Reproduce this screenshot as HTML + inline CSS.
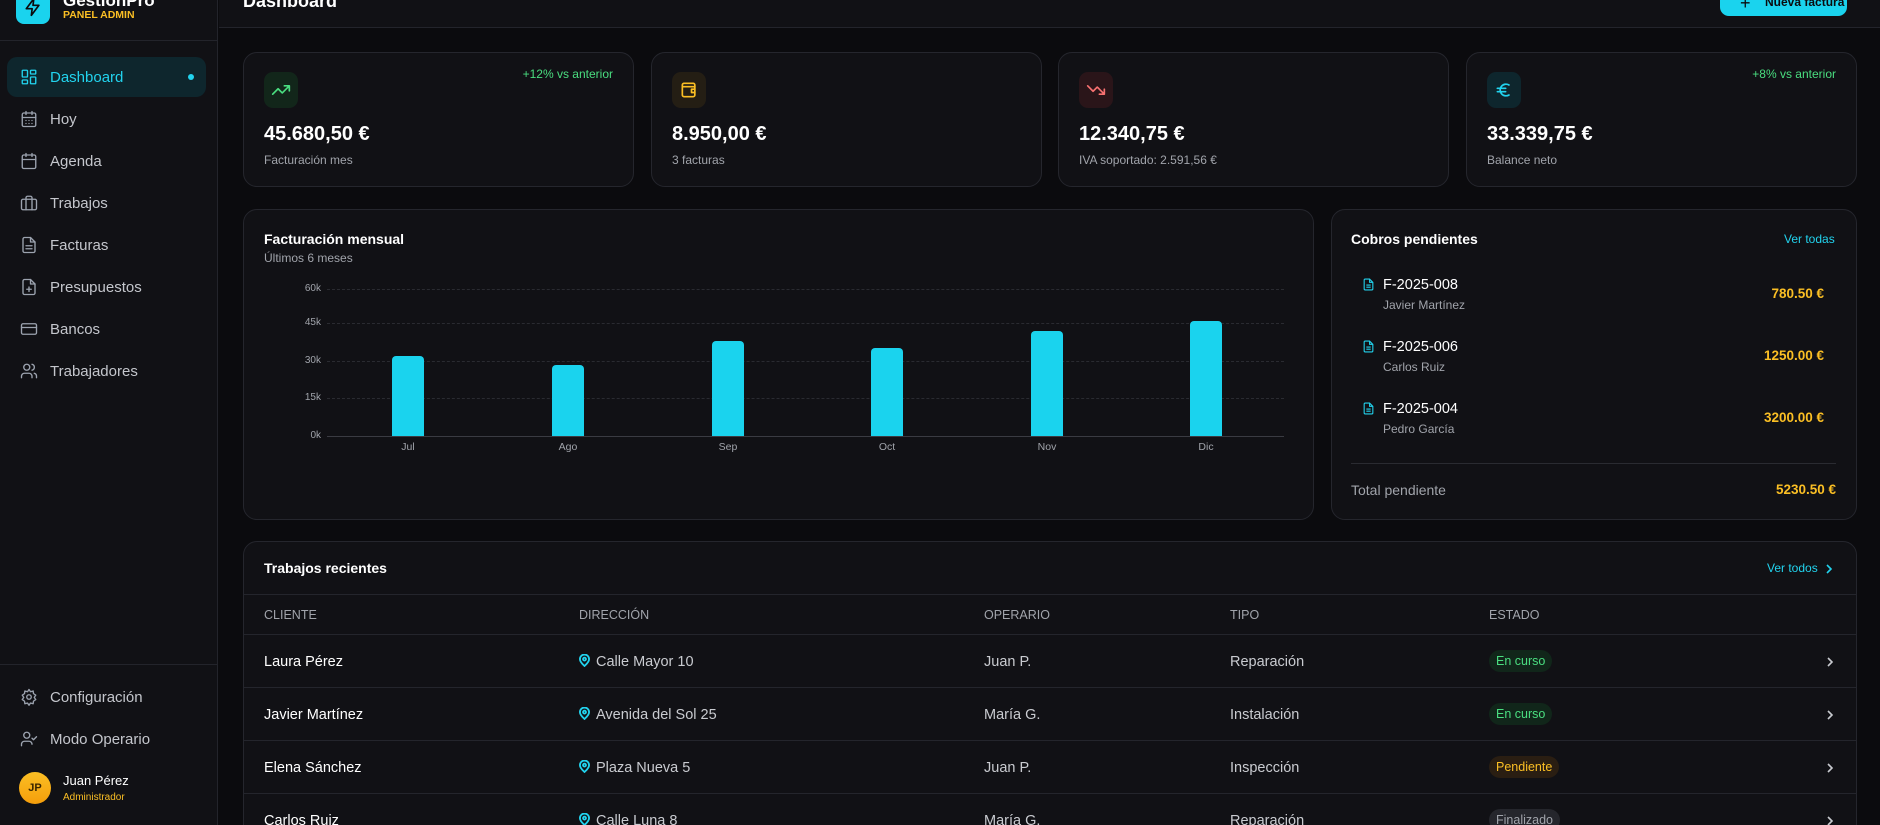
<!DOCTYPE html>
<html style="width:1880px;height:825px;overflow:hidden"><head><meta charset="utf-8"><style>
*{box-sizing:border-box;margin:0;padding:0}
body{width:1880px;height:825px;overflow:hidden;background:#0b0b0e;font-family:"Liberation Sans",sans-serif;color:#e5e7eb;position:relative}
.abs{position:absolute}
.sb{left:0;top:0;width:218px;height:825px;background:#111115;border-right:1px solid #23242b}
.nav{position:absolute;left:7px;width:199px;height:40px;display:flex;align-items:center;padding-left:13px;font-size:15px;color:#c4c6cc}
.nav svg{width:18px;height:18px;margin-right:12px;stroke:#9ca3af;fill:none;stroke-width:1.8;stroke-linecap:round;stroke-linejoin:round}
.card{position:absolute;background:#111115;border:1px solid #25262d;border-radius:14px}
.ico{position:absolute;left:20px;top:19px;width:34px;height:36px;border-radius:9px;display:flex;align-items:center;justify-content:center}
.ico svg{width:20px;height:20px;fill:none;stroke-width:2;stroke-linecap:round;stroke-linejoin:round}
.val{position:absolute;left:20px;top:70px;font-size:20px;font-weight:bold;color:#fff}
.lbl{position:absolute;left:20px;top:100px;font-size:12px;color:#a1a4ab}
.pct{position:absolute;right:20px;top:14px;font-size:12px;color:#4ade80}
.ylab{position:absolute;width:40px;text-align:right;font-size:10px;color:#a1a4ab}
.grid{position:absolute;left:327px;width:957px;border-top:1px dashed #2a2b31}
.bar{position:absolute;width:32px;background:#1ad3ee;border-radius:4px 4px 0 0;bottom:389px}
.xl{position:absolute;top:441px;width:60px;text-align:center;font-size:10.5px;color:#a1a4ab}
.th{position:absolute;top:608px;font-size:12.5px;color:#a1a4ab}
.row{position:absolute;left:244px;width:1612px;height:53px;border-top:1px solid #24252c}
.row span{position:absolute;top:19px;font-size:14.5px;color:#c9cbd0}
.badge{position:absolute;top:15px;height:22px;padding:0 7px;border-radius:11px;font-size:12.5px;line-height:22px}
.pin{width:11px;height:13px;vertical-align:-1px;margin-right:6px;fill:none;stroke:#22d3ee;stroke-width:2}
.chev{position:absolute;left:1581px;top:20px;width:10px;height:14px;fill:none;stroke:#c9cbd0;stroke-width:1.6}
</style></head><body>
<div class="abs sb"></div>
<div class="abs" style="left:16px;top:-10px;width:34px;height:34px;border-radius:8px;background:#1ad3ee;display:flex;align-items:center;justify-content:center"><svg width="20" height="20" viewBox="0 0 24 24" fill="none" stroke="#0b0b0e" stroke-width="2" stroke-linejoin="round"><path d="M13 2L4 14h7l-1 8 9-12h-7z"/></svg></div>
<div class="abs" style="left:63px;top:-9px;font-size:17px;font-weight:bold;color:#fff">GestiónPro</div>
<div class="abs" style="left:63px;top:9px;font-size:10.5px;font-weight:bold;color:#fbbf24">PANEL ADMIN</div>
<div class="abs" style="left:0;top:40px;width:218px;border-top:1px solid #23242b"></div>

<div class="nav" style="top:57px;background:#0e262d;border-radius:10px;color:#22d3ee"><svg style="stroke:#22d3ee" viewBox="0 0 24 24"><rect x="3" y="3" width="7" height="9" rx="1"/><rect x="14" y="3" width="7" height="5" rx="1"/><rect x="14" y="12" width="7" height="9" rx="1"/><rect x="3" y="16" width="7" height="5" rx="1"/></svg>Dashboard<span style="position:absolute;right:12px;top:17px;width:6px;height:6px;border-radius:3px;background:#22d3ee"></span></div>
<div class="nav" style="top:99px"><svg viewBox="0 0 24 24"><rect x="3" y="4" width="18" height="18" rx="2"/><path d="M16 2v4M8 2v4M3 10h18M8 14h.01M12 14h.01M16 14h.01M8 18h.01M12 18h.01M16 18h.01"/></svg>Hoy</div>
<div class="nav" style="top:141px"><svg viewBox="0 0 24 24"><rect x="3" y="4" width="18" height="18" rx="2"/><path d="M16 2v4M8 2v4M3 10h18"/></svg>Agenda</div>
<div class="nav" style="top:183px"><svg viewBox="0 0 24 24"><rect x="2" y="7" width="20" height="14" rx="2"/><path d="M16 21V5a2 2 0 0 0-2-2h-4a2 2 0 0 0-2 2v16"/></svg>Trabajos</div>
<div class="nav" style="top:225px"><svg viewBox="0 0 24 24"><path d="M14 2H6a2 2 0 0 0-2 2v16a2 2 0 0 0 2 2h12a2 2 0 0 0 2-2V8z"/><path d="M14 2v6h6M16 13H8M16 17H8"/></svg>Facturas</div>
<div class="nav" style="top:267px"><svg viewBox="0 0 24 24"><path d="M14 2H6a2 2 0 0 0-2 2v16a2 2 0 0 0 2 2h12a2 2 0 0 0 2-2V8z"/><path d="M14 2v6h6M12 18v-6M9 15h6"/></svg>Presupuestos</div>
<div class="nav" style="top:309px"><svg viewBox="0 0 24 24"><rect x="2" y="5" width="20" height="14" rx="2"/><path d="M2 10h20"/></svg>Bancos</div>
<div class="nav" style="top:351px"><svg viewBox="0 0 24 24"><circle cx="9" cy="7" r="4"/><path d="M16 21v-2a4 4 0 0 0-4-4H6a4 4 0 0 0-4 4v2M16 3.1a4 4 0 0 1 0 7.8M22 21v-2a4 4 0 0 0-3-3.9"/></svg>Trabajadores</div>

<div class="abs" style="left:0;top:664px;width:218px;border-top:1px solid #23242b"></div>
<div class="nav" style="top:677px"><svg viewBox="0 0 24 24"><circle cx="12" cy="12" r="3"/><path d="M12 2l2 3 3.5-1 .5 3.5 3 2-2 3 2 3-3 2-.5 3.5-3.5-1-2 3-2-3-3.5 1-.5-3.5-3-2 2-3-2-3 3-2 .5-3.5 3.5 1z"/></svg>Configuración</div>
<div class="nav" style="top:719px"><svg viewBox="0 0 24 24"><circle cx="9" cy="7" r="4"/><path d="M2 21v-2a4 4 0 0 1 4-4h6a4 4 0 0 1 4 4M16 11l2 2 4-4"/></svg>Modo Operario</div>
<div class="abs" style="left:19px;top:772px;width:32px;height:32px;border-radius:16px;background:linear-gradient(#fbbf24,#f59e0b);color:#3a2500;font-size:11px;font-weight:bold;text-align:center;line-height:32px">JP</div>
<div class="abs" style="left:63px;top:773px;font-size:13px;color:#fff">Juan Pérez</div>
<div class="abs" style="left:63px;top:792px;font-size:10px;color:#fbbf24">Administrador</div>

<!-- header -->
<div class="abs" style="left:219px;top:0;width:1661px;height:28px;background:#111115;border-bottom:1px solid #23242b"></div>
<div class="abs" style="left:243px;top:-9px;font-size:18px;font-weight:bold;color:#fff">Dashboard</div>
<div class="abs" style="left:1720px;top:-12px;width:127px;height:28px;border-radius:9px;background:#1ad3ee;color:#0b0b0e;font-size:12px;font-weight:bold;line-height:28px;padding-left:45px;white-space:nowrap;overflow:hidden">Nueva factura</div>
<div class="abs" style="left:1740px;top:-2px;font-size:18px;color:#0b0b0e;line-height:10px">+</div>

<!-- stat cards -->
<div class="card" style="left:243px;top:52px;width:391px;height:135px">
<div class="ico" style="background:#12261a"><svg style="stroke:#4ade80" viewBox="0 0 24 24"><path d="M22 7l-8.5 8.5-5-5L2 17M16 7h6v6"/></svg></div>
<div class="pct">+12% vs anterior</div><div class="val">45.680,50 €</div><div class="lbl">Facturación mes</div></div>
<div class="card" style="left:651px;top:52px;width:391px;height:135px">
<div class="ico" style="background:#241e14"><svg style="stroke:#fbbf24" viewBox="0 0 24 24"><rect x="4" y="4" width="15" height="16" rx="2"/><path d="M4 8h15M19 11h-4v4h4"/></svg></div>
<div class="val">8.950,00 €</div><div class="lbl">3 facturas</div></div>
<div class="card" style="left:1058px;top:52px;width:391px;height:135px">
<div class="ico" style="background:#2a1519"><svg style="stroke:#f87171" viewBox="0 0 24 24"><path d="M22 17l-8.5-8.5-5 5L2 7M16 17h6v-6"/></svg></div>
<div class="val">12.340,75 €</div><div class="lbl">IVA soportado: 2.591,56 €</div></div>
<div class="card" style="left:1466px;top:52px;width:391px;height:135px">
<div class="ico" style="background:#0e262d"><svg style="stroke:#22d3ee" viewBox="0 0 24 24"><path d="M18 6a7 7 0 1 0 0 12M4 10h10M4 14h10"/></svg></div>
<div class="pct">+8% vs anterior</div><div class="val">33.339,75 €</div><div class="lbl">Balance neto</div></div>

<!-- chart -->
<div class="card" style="left:243px;top:209px;width:1071px;height:311px"></div>
<div class="abs" style="left:264px;top:231px;font-size:14px;font-weight:bold;color:#fff">Facturación mensual</div>
<div class="abs" style="left:264px;top:251px;font-size:12px;color:#a1a4ab">Últimos 6 meses</div>
<div class="ylab" style="left:281px;top:283px">60k</div><div class="grid" style="top:289px"></div>
<div class="ylab" style="left:281px;top:317px">45k</div><div class="grid" style="top:323px"></div>
<div class="ylab" style="left:281px;top:355px">30k</div><div class="grid" style="top:361px"></div>
<div class="ylab" style="left:281px;top:392px">15k</div><div class="grid" style="top:398px"></div>
<div class="ylab" style="left:281px;top:430px">0k</div><div class="grid" style="top:436px;border-top:1px solid #3a3b42"></div>
<div class="bar" style="left:392px;height:80px"></div><div class="xl" style="left:378px">Jul</div>
<div class="bar" style="left:552px;height:71px"></div><div class="xl" style="left:538px">Ago</div>
<div class="bar" style="left:712px;height:95px"></div><div class="xl" style="left:698px">Sep</div>
<div class="bar" style="left:871px;height:88px"></div><div class="xl" style="left:857px">Oct</div>
<div class="bar" style="left:1031px;height:105px"></div><div class="xl" style="left:1017px">Nov</div>
<div class="bar" style="left:1190px;height:115px"></div><div class="xl" style="left:1176px">Dic</div>

<!-- cobros -->
<div class="card" style="left:1331px;top:209px;width:526px;height:311px"></div>
<div class="abs" style="left:1351px;top:231px;font-size:14px;font-weight:bold;color:#fff">Cobros pendientes</div>
<div class="abs" style="left:1784px;top:232px;font-size:12px;color:#22d3ee">Ver todas</div>
<svg class="abs" style="left:1362px;top:277px" width="13" height="15" viewBox="0 0 24 24" fill="none" stroke="#22d3ee" stroke-width="2"><path d="M14 2H6a2 2 0 0 0-2 2v16a2 2 0 0 0 2 2h12a2 2 0 0 0 2-2V8zM14 2v6h6M16 13H8M16 17H8"/></svg>
<div class="abs" style="left:1383px;top:277px;font-size:14.5px;color:#fff">F-2025-008</div>
<div class="abs" style="left:1383px;top:298px;font-size:12px;color:#a1a4ab">Javier Martínez</div>
<div class="abs" style="left:1730px;top:286px;width:94px;text-align:right;font-size:13.5px;font-weight:bold;color:#fbbf24">780.50 €</div>
<svg class="abs" style="left:1362px;top:339px" width="13" height="15" viewBox="0 0 24 24" fill="none" stroke="#22d3ee" stroke-width="2"><path d="M14 2H6a2 2 0 0 0-2 2v16a2 2 0 0 0 2 2h12a2 2 0 0 0 2-2V8zM14 2v6h6M16 13H8M16 17H8"/></svg>
<div class="abs" style="left:1383px;top:339px;font-size:14.5px;color:#fff">F-2025-006</div>
<div class="abs" style="left:1383px;top:360px;font-size:12px;color:#a1a4ab">Carlos Ruiz</div>
<div class="abs" style="left:1730px;top:348px;width:94px;text-align:right;font-size:13.5px;font-weight:bold;color:#fbbf24">1250.00 €</div>
<svg class="abs" style="left:1362px;top:401px" width="13" height="15" viewBox="0 0 24 24" fill="none" stroke="#22d3ee" stroke-width="2"><path d="M14 2H6a2 2 0 0 0-2 2v16a2 2 0 0 0 2 2h12a2 2 0 0 0 2-2V8zM14 2v6h6M16 13H8M16 17H8"/></svg>
<div class="abs" style="left:1383px;top:401px;font-size:14.5px;color:#fff">F-2025-004</div>
<div class="abs" style="left:1383px;top:422px;font-size:12px;color:#a1a4ab">Pedro García</div>
<div class="abs" style="left:1730px;top:410px;width:94px;text-align:right;font-size:13.5px;font-weight:bold;color:#fbbf24">3200.00 €</div>
<div class="abs" style="left:1351px;top:463px;width:485px;border-top:1px solid #2a2b31"></div>
<div class="abs" style="left:1351px;top:482px;font-size:14px;color:#a1a4ab">Total pendiente</div>
<div class="abs" style="left:1736px;top:482px;width:100px;text-align:right;font-size:13.5px;font-weight:bold;color:#fbbf24">5230.50 €</div>

<!-- trabajos -->
<div class="card" style="left:243px;top:541px;width:1614px;height:300px;border-bottom-left-radius:0;border-bottom-right-radius:0"></div>
<div class="abs" style="left:264px;top:560px;font-size:14px;font-weight:bold;color:#fff">Trabajos recientes</div>
<div class="abs" style="left:1767px;top:561px;font-size:12px;color:#22d3ee">Ver todos</div>
<svg class="abs" style="left:1825px;top:563px" width="8" height="12" viewBox="0 0 8 12" fill="none" stroke="#22d3ee" stroke-width="1.6"><path d="M2 2l4 4-4 4"/></svg>
<div class="abs" style="left:244px;top:594px;width:1612px;border-top:1px solid #24252c"></div>
<div class="th" style="left:264px">CLIENTE</div><div class="th" style="left:579px">DIRECCIÓN</div><div class="th" style="left:984px">OPERARIO</div><div class="th" style="left:1230px">TIPO</div><div class="th" style="left:1489px">ESTADO</div>

<div class="row" style="top:634px"><span style="left:20px;color:#fff">Laura Pérez</span><span style="left:335px"><svg class="pin" viewBox="0 0 12 14"><path d="M6 13s5-4.5 5-7.5a5 5 0 0 0-10 0C1 8.5 6 13 6 13z"/><circle cx="6" cy="5.5" r="1.6"/></svg>Calle Mayor 10</span><span style="left:740px">Juan P.</span><span style="left:986px">Reparación</span><div class="badge" style="left:1245px;background:#11261a;color:#4ade80">En curso</div><svg class="chev" viewBox="0 0 10 14"><path d="M3 3l4 4-4 4"/></svg></div>
<div class="row" style="top:687px"><span style="left:20px;color:#fff">Javier Martínez</span><span style="left:335px"><svg class="pin" viewBox="0 0 12 14"><path d="M6 13s5-4.5 5-7.5a5 5 0 0 0-10 0C1 8.5 6 13 6 13z"/><circle cx="6" cy="5.5" r="1.6"/></svg>Avenida del Sol 25</span><span style="left:740px">María G.</span><span style="left:986px">Instalación</span><div class="badge" style="left:1245px;background:#11261a;color:#4ade80">En curso</div><svg class="chev" viewBox="0 0 10 14"><path d="M3 3l4 4-4 4"/></svg></div>
<div class="row" style="top:740px"><span style="left:20px;color:#fff">Elena Sánchez</span><span style="left:335px"><svg class="pin" viewBox="0 0 12 14"><path d="M6 13s5-4.5 5-7.5a5 5 0 0 0-10 0C1 8.5 6 13 6 13z"/><circle cx="6" cy="5.5" r="1.6"/></svg>Plaza Nueva 5</span><span style="left:740px">Juan P.</span><span style="left:986px">Inspección</span><div class="badge" style="left:1245px;background:#2a1e12;color:#fbbf24">Pendiente</div><svg class="chev" viewBox="0 0 10 14"><path d="M3 3l4 4-4 4"/></svg></div>
<div class="row" style="top:793px;height:32px;overflow:hidden"><span style="left:20px;color:#fff">Carlos Ruiz</span><span style="left:335px"><svg class="pin" viewBox="0 0 12 14"><path d="M6 13s5-4.5 5-7.5a5 5 0 0 0-10 0C1 8.5 6 13 6 13z"/><circle cx="6" cy="5.5" r="1.6"/></svg>Calle Luna 8</span><span style="left:740px">María G.</span><span style="left:986px">Reparación</span><div class="badge" style="left:1245px;background:#25262c;color:#a1a4ab">Finalizado</div><svg class="chev" viewBox="0 0 10 14"><path d="M3 3l4 4-4 4"/></svg></div>
</body></html>
